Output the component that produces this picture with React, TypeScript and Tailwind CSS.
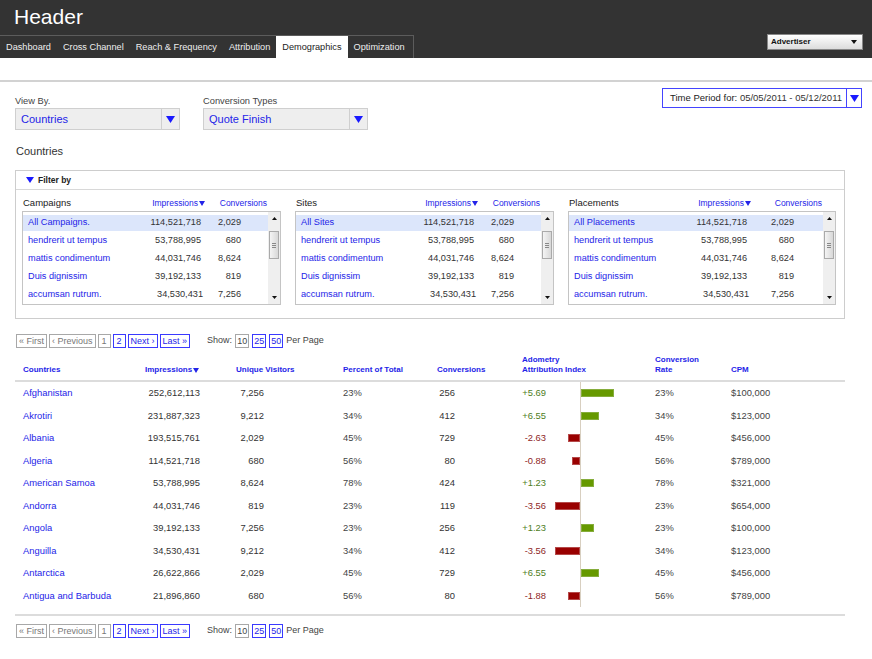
import React from 'react'

const BLUE = 'text-[#2424e8]'

function Tri({ w = 9, h = 7, color = '#1a1aff' }: { w?: number; h?: number; color?: string }) {
  return (
    <svg width={w} height={h} viewBox={`0 0 ${w} ${h}`} className="block">
      <polygon points={`0,0 ${w},0 ${w / 2},${h}`} fill={color} />
    </svg>
  )
}

function UpTri({ w = 5, h = 3 }: { w?: number; h?: number }) {
  return (
    <svg width={w} height={h} viewBox={`0 0 ${w} ${h}`} className="block">
      <polygon points={`0,${h} ${w},${h} ${w / 2},0`} fill="#111" />
    </svg>
  )
}

const TABS = ['Dashboard', 'Cross Channel', 'Reach & Frequency', 'Attribution', 'Demographics', 'Optimization']

function SelectBox({ label, value }: { label: string; value: string }) {
  return (
    <div className="w-[165px]">
      <div className="h-[13px] text-[9.3px] leading-[13px] text-[#444]">{label}</div>
      <div className="flex h-[22px] border border-[#cfcfcf] bg-[#eeeeee]">
        <div className={`flex-1 pl-[5px] text-[11px] leading-[20px] ${BLUE}`}>{value}</div>
        <div className="flex w-[18px] items-center justify-center border-l border-[#cfcfcf]">
          <Tri />
        </div>
      </div>
    </div>
  )
}

const LIST_ROWS = [
  ['114,521,718', '2,029'],
  ['53,788,995', '680'],
  ['44,031,746', '8,624'],
  ['39,192,133', '819'],
  ['34,530,431', '7,256'],
]
const LIST_NAMES = ['hendrerit ut tempus', 'mattis condimentum', 'Duis dignissim', 'accumsan rutrum.']

function FilterList({ title, first, width, convW, convHeadW }: { title: string; first: string; width: string; convW: string; convHeadW: string }) {
  const names = [first, ...LIST_NAMES]
  return (
    <div className={width}>
      <div className="flex h-[13px] items-center text-[8.5px]">
        <div className="w-[123px] pl-[1px] text-[9.5px] text-[#222]">{title}</div>
        <div className={`flex w-[60px] items-center justify-end gap-[1px] ${BLUE}`}>
          Impressions<Tri w={6} h={5} color="#2424e8" />
        </div>
        <div className={`${convHeadW} text-right ${BLUE}`}>Conversions</div>
      </div>
      <div className="mt-[1px] flex h-[94px] border border-[#c4c4c4] bg-white">
        <div className="flex flex-1 flex-col gap-[2px] pt-[3px]">
          {names.map((n, i) => (
            <div key={n} className={`flex h-[16px] items-center text-[9.2px] ${i === 0 ? 'bg-[#dce6fb]' : ''}`}>
              <div className={`w-[118px] pl-[5px] ${BLUE}`}>{n}</div>
              <div className={`w-[60px] text-right text-[#333] ${i === 4 ? 'relative left-[2px]' : ''}`}>{LIST_ROWS[i][0]}</div>
              <div className={`${convW} text-right text-[#333]`}>{LIST_ROWS[i][1]}</div>
            </div>
          ))}
        </div>
        <div className="flex w-[12px] flex-col items-center bg-[#efefef]">
          <div className="mt-[5px]"><UpTri /></div>
          <div className="mt-[11px] flex h-[28px] w-[10px] flex-col items-center justify-center gap-[1px] border border-[#aaa] bg-gradient-to-r from-[#f4f4f4] to-[#d8d8d8]">
            <div className="h-px w-[4px] bg-[#888]" />
            <div className="h-px w-[4px] bg-[#888]" />
            <div className="h-px w-[4px] bg-[#888]" />
          </div>
          <div className="mt-auto mb-[5px]"><Tri w={5} h={3} color="#111" /></div>
        </div>
      </div>
    </div>
  )
}

function PBox({ children, active, cls = 'px-[2px]' }: { children: React.ReactNode; active?: boolean; cls?: string }) {
  return (
    <span className={`h-[14px] border leading-[12px] ${cls} ${active ? 'border-[#3a3aff] text-[#2424e8]' : 'border-[#a8a8a8] text-[#777]'}`}>
      {children}
    </span>
  )
}

function Pager() {
  return (
    <div className="flex h-[14px] items-center pl-[1px] text-[9px]">
      <div className="flex gap-[2px]">
        <PBox>« First</PBox>
        <PBox>‹ Previous</PBox>
        <PBox cls="px-[3px]">1</PBox>
        <PBox active cls="px-[3px]">2</PBox>
        <PBox active>Next ›</PBox>
        <PBox active>Last »</PBox>
      </div>
      <span className="ml-[17px] text-[#444]">Show:</span>
      <div className="ml-[3px] flex gap-[3px]">
        <PBox cls="px-[1px]"><span className="text-[#444]">10</span></PBox>
        <PBox active cls="px-[1px]">25</PBox>
        <PBox active cls="px-[1px]">50</PBox>
      </div>
      <span className="ml-[3px] text-[#444]">Per Page</span>
    </div>
  )
}

const ROWS: [string, string, string, string, string, string, number, string, string][] = [
  ['Afghanistan', '252,612,113', '7,256', '23%', '256', '+5.69', 33, '23%', '$100,000'],
  ['Akrotiri', '231,887,323', '9,212', '34%', '412', '+6.55', 18, '34%', '$123,000'],
  ['Albania', '193,515,761', '2,029', '45%', '729', '-2.63', -12, '45%', '$456,000'],
  ['Algeria', '114,521,718', '680', '56%', '80', '-0.88', -8, '56%', '$789,000'],
  ['American Samoa', '53,788,995', '8,624', '78%', '424', '+1.23', 13, '78%', '$321,000'],
  ['Andorra', '44,031,746', '819', '23%', '119', '-3.56', -25, '23%', '$654,000'],
  ['Angola', '39,192,133', '7,256', '23%', '256', '+1.23', 13, '23%', '$100,000'],
  ['Anguilla', '34,530,431', '9,212', '34%', '412', '-3.56', -25, '34%', '$123,000'],
  ['Antarctica', '26,622,866', '2,029', '45%', '729', '+6.55', 18, '45%', '$456,000'],
  ['Antigua and Barbuda', '21,896,860', '680', '56%', '80', '-1.88', -12, '56%', '$789,000'],
]

const GRID = 'grid grid-cols-[122px_91px_107px_94px_85px_133px_76px_1fr]'

export default function App() {
  return (
    <div className="min-h-[659px] w-[872px] bg-white font-['Liberation_Sans',Arial,sans-serif] text-[#333]">
      {/* Header */}
      <div className="flex h-[58px] flex-col bg-[#333333]">
        <div className="pl-[14px] pt-[5px] text-[21px] leading-[24px] text-white">Header</div>
        <div className="mt-auto flex items-start justify-between">
          <div className="flex h-[23px] border-t border-r border-[#5c5c5c] pr-[2px]">
            {TABS.map(t => (
              <div
                key={t}
                className={`px-[6px] text-[9.2px] leading-[22px] ${t === 'Demographics' ? 'bg-white text-[#222]' : 'text-[#eee]'}`}
              >
                {t}
              </div>
            ))}
          </div>
          <div className="mr-[9px] -mt-px flex h-[16px] w-[96px] items-center justify-between border border-[#888] bg-gradient-to-b from-white to-[#dcdcdc] pl-[3px] pr-[5px]">
            <span className="text-[8px] font-bold text-[#111]">Advertiser</span>
            <Tri w={6} h={4} color="#111" />
          </div>
        </div>
      </div>

      <div className="mt-[22px] h-[2px] bg-[#d2d2d2]" />

      {/* Top controls */}
      <div className="flex items-start justify-between pl-[15px] pr-[10px]">
        <div className="flex gap-[23px] pt-[13px]">
          <SelectBox label="View By." value="Countries" />
          <SelectBox label="Conversion Types" value="Quote Finish" />
        </div>
        <div className="mt-[6px] flex h-[20px] w-[200px] border border-[#4444ff]">
          <div className="flex-1 pl-[7px] text-[9.5px] leading-[18px] text-[#222]">
            Time Period for: <span className="text-[#333]">05/05/2011 - 05/12/2011</span>
          </div>
          <div className="flex w-[15px] items-center justify-center border-l border-[#4444ff]">
            <Tri />
          </div>
        </div>
      </div>

      <div className="mt-[14px] pl-[16px] text-[11px] leading-[14px] text-[#333]">Countries</div>

      {/* Filter box */}
      <div className="ml-[15px] mt-[12px] w-[830px] border border-[#cdcdcd]">
        <div className="flex h-[19px] items-center gap-[4px] border-b border-[#d8d8d8] pl-[10px]">
          <Tri w={8} h={6} />
          <span className="text-[8.5px] font-bold text-[#222]">Filter by</span>
        </div>
        <div className="flex gap-[14px] pl-[6px] pt-[7px] pb-[13px]">
          <FilterList title="Campaigns" first="All Campaigns." width="w-[259px]" convW="w-[40px]" convHeadW="w-[62px]" />
          <FilterList title="Sites" first="All Sites" width="w-[259px]" convW="w-[40px]" convHeadW="w-[62px]" />
          <FilterList title="Placements" first="All Placements" width="w-[268px]" convW="w-[47px]" convHeadW="w-[71px]" />
        </div>
      </div>

      {/* Table */}
      <div className="ml-[15px] mt-[15px] w-[830px]">
        <Pager />
        <div className={`${GRID} h-[34px] items-end border-b-2 border-[#dcdcdc] pb-[5px] pl-[8px] text-[8px] font-bold leading-[10px] ${BLUE}`}>
          <div>Countries</div>
          <div className="flex items-center gap-[1px]">Impressions<Tri w={6} h={5} color="#2424e8" /></div>
          <div>Unique Visitors</div>
          <div>Percent of Total</div>
          <div>Conversions</div>
          <div>Adometry<br />Attribution Index</div>
          <div>Conversion<br />Rate</div>
          <div>CPM</div>
        </div>
        <div className="border-b-2 border-[#dcdcdc] pb-[7px]">
          {ROWS.map(r => {
            const pos = r[6] > 0
            return (
              <div key={r[0]} className={`${GRID} h-[22.5px] items-center pl-[8px] text-[9.4px] text-[#333]`}>
                <div className={BLUE}>{r[0]}</div>
                <div><span className="inline-block w-[55px] text-right">{r[1]}</span></div>
                <div><span className="inline-block w-[28px] text-right">{r[2]}</span></div>
                <div className="text-[#444]">{r[3]}</div>
                <div><span className="inline-block w-[18px] text-right">{r[4]}</span></div>
                <div className="flex h-full items-center">
                  <span className={`inline-block w-[24px] text-right ${pos ? 'text-[#4e7d1c]' : 'text-[#8e1f1f]'}`}>{r[5]}</span>
                  <div className="relative h-full w-[109px]">
                    <div className="absolute top-0 bottom-0 left-[34px] w-px bg-[#d8cfc0]" />
                    <div
                      className={`absolute top-[7px] h-[8px] border ${pos ? 'left-[35px] border-[#86ad3c] bg-[#669900]' : 'right-[75px] border-[#b54a4a] bg-[#990000]'}`}
                      style={{ width: Math.abs(r[6]) }}
                    />
                  </div>
                </div>
                <div className="text-[#444]">{r[7]}</div>
                <div className="text-[#444]">{r[8]}</div>
              </div>
            )
          })}
        </div>
        <div className="mt-[8px]">
          <Pager />
        </div>
      </div>
    </div>
  )
}
